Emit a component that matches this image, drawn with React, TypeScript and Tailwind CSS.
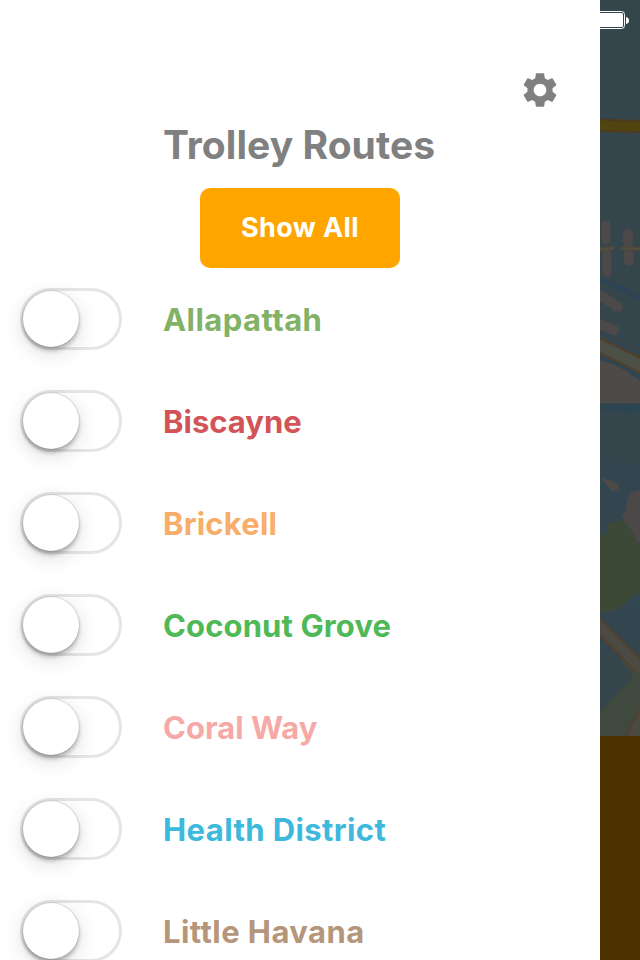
import { MdSettings } from "react-icons/md";

const routes = [
  { name: "Allapattah", style: "text-[#82b266] tracking-[0.45px]" },
  { name: "Biscayne", style: "text-[#d25459] tracking-[0px]" },
  { name: "Brickell", style: "text-[#f8ad68] tracking-[0.2px]" },
  { name: "Coconut Grove", style: "text-[#50b957] tracking-[0.12px]" },
  { name: "Coral Way", style: "text-[#f6aaa7] tracking-[0px]" },
  { name: "Health District", style: "text-[#3cb9dc] tracking-[0.4px]" },
  { name: "Little Havana", style: "text-[#b5967a] tracking-[0.43px]" },
];

function Toggle() {
  return (
    <button
      role="switch"
      aria-checked={false}
      className="h-[62px] w-[102px] shrink-0 rounded-full border-[3px] border-[#e5e5e5] bg-white"
    >
      <span className="block size-[56px] rounded-full bg-white shadow-[0_6px_22px_rgba(0,0,0,0.14),0_4px_4px_rgba(0,0,0,0.22),0_0_2px_rgba(0,0,0,0.3)]" />
    </button>
  );
}

function MapStrip() {
  return (
    <svg width="40" height="736" viewBox="0 0 40 736" className="block">
      <rect width="40" height="736" fill="#35454c" />
      <path d="M0 118.500L40 120V133L0 132Z" fill="#4d3b20" />
      <path d="M0 120.500L40 122V131L0 130Z" fill="#504510" />
      <g stroke="#4d494a" strokeLinecap="round" fill="none">
        <path d="M6 225V240M7 253V272" strokeWidth="9" />
        <path d="M28 234V242M29 254V261" strokeWidth="10" />
      </g>
      <path d="M0 249.500L14 248M21 248L40 249" stroke="#504936" strokeWidth="4" fill="none" />
      <path d="M0 249.500L14 248M21 248L40 249" stroke="#515042" strokeWidth="1.500" fill="none" />
      <path d="M0 280Q20 286 40 299" stroke="#2c4554" strokeWidth="4" fill="none" />
      <path d="M0 295L18 307M0 324L14 330" stroke="#4d494a" strokeWidth="10" strokeLinecap="round" />
      <path d="M0 359Q22 364 40 379V403H0Z" fill="#4d4a48" />
      <path d="M0 359Q22 364 40 379" stroke="#30454f" strokeWidth="3" fill="none" />
      <path d="M-4 344L44 367" stroke="#52402a" strokeWidth="15" />
      <path d="M-4 344L44 367" stroke="#4c5046" strokeWidth="11" />
      <path d="M0 404Q15 407 40 404V412Q18 414 0 409Z" fill="#2b4553" />
      <path d="M0 460Q22 466 40 464V650H0Z" fill="#33454f" />
      <path d="M2 478Q17 481 19 486Q19 491 12 491Q8 488 2 478Z" fill="#4c4b48" />
      <path d="M40 490C27 491 27 500 26 512L22 515L24 522L31 529L37 542H40Z" fill="#4d4848" />
      <path d="M0 536L7 532L9 523L17 521L20 519L26 523L31 529L37 542L40 544V593Q31 597 24 605Q12 613 0 613Z" fill="#3c4936" />
      <path d="M40 594L29 601V605H40Z" fill="#324653" />
      <path d="M10 642L40 671V736H0V712L13 698L33 677L24 664Z" fill="#3f493d" />
      <path d="M-5 622L42 669" stroke="#51402d" strokeWidth="14" />
      <path d="M-5 622L42 669" stroke="#4c4b43" strokeWidth="10" />
      <path d="M26 736L40 708V736Z" fill="#4b4a40" />
      <path d="M26 736L40 708" stroke="#51402f" strokeWidth="2" />
      <rect x="-5" y="11.500" width="29.500" height="17" rx="3" fill="none" stroke="#fff" strokeWidth="1" />
      <rect x="-5" y="13" width="28" height="14" rx="1.500" fill="#fff" />
      <path d="M26 17Q29 17.500 29 20.500Q29 23.500 26 24Z" fill="#fff" />
    </svg>
  );
}

export default function App() {
  return (
    <main className="flex h-[960px] w-[640px] overflow-hidden bg-white font-['Inter','Liberation_Sans',sans-serif] font-bold">
      <section className="w-[600px] shrink-0 overflow-hidden bg-white">
        <header className="flex h-[268px] flex-col pt-[69px]">
          <button aria-label="Settings" className="mr-[39px] self-end text-[#808080]">
            <MdSettings size={42} />
          </button>
          <h1 className="ml-[163px] mt-[10px] whitespace-nowrap text-[39px] leading-[48px] tracking-[0.05px] text-[#808080]">
            Trolley Routes
          </h1>
          <button className="mt-[19px] h-20 w-[200px] shrink-0 self-center rounded-[10px] bg-[#ffa500] text-[27px] leading-9 tracking-[0.4px] text-white">
            Show All
          </button>
        </header>
        <ul className="mt-5 flex flex-col gap-10 pl-5">
          {routes.map((route) => (
            <li key={route.name} className="flex h-[62px] items-center gap-[41px]">
              <Toggle />
              <span className={"whitespace-nowrap pt-0.5 text-[31px] leading-10 " + route.style}>{route.name}</span>
            </li>
          ))}
        </ul>
      </section>
      <aside className="h-[960px] w-10 shrink-0 bg-[#4d3200]">
        <MapStrip />
      </aside>
    </main>
  );
}
